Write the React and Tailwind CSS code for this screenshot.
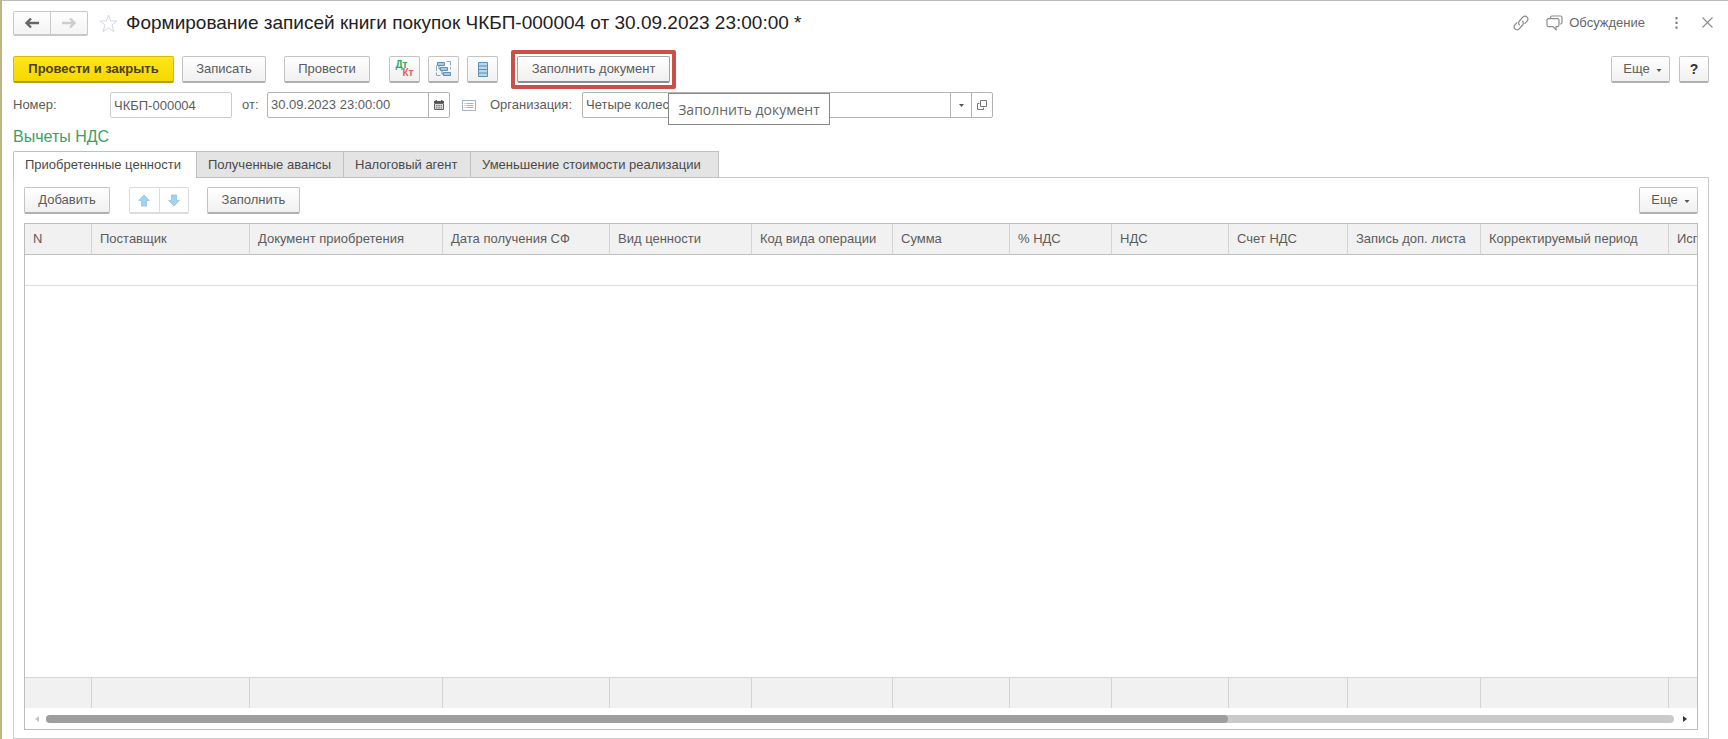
import React, { useState } from 'react';

const columns = [
    { title: 'N', width: 67 },
    { title: 'Поставщик', width: 158 },
    { title: 'Документ приобретения', width: 193 },
    { title: 'Дата получения СФ', width: 167 },
    { title: 'Вид ценности', width: 142 },
    { title: 'Код вида операции', width: 141 },
    { title: 'Сумма', width: 117 },
    { title: '% НДС', width: 102 },
    { title: 'НДС', width: 117 },
    { title: 'Счет НДС', width: 119 },
    { title: 'Запись доп. листа', width: 133 },
    { title: 'Корректируемый период', width: 188 },
    { title: 'Исправление', width: 160 },
];

const tabs = [
    { title: 'Приобретенные ценности', width: 'w-[184px]' },
    { title: 'Полученные авансы', width: 'w-[147px]' },
    { title: 'Налоговый агент', width: 'w-[127px]' },
    { title: 'Уменьшение стоимости реализации', width: 'w-[248px]' },
];

const tones = {
    plain: 'border-[#c4c4c4] border-b-[#b0b0b0] from-white to-[#f0f0f0]',
    primary: 'border-[#d6ba10] border-b-[#b39c10] from-[#ffe619] to-[#f5d800] font-bold text-[#4a4010]',
    focused: 'border-[#a4a4a8] border-b-[#8c8c94] from-white to-[#f0f0f0]',
};

function Button({ tone = 'plain', className = '', children, ...props }) {
    return (
        <button
            type="button"
            className={`flex h-[27px] shrink-0 items-center justify-center whitespace-nowrap rounded-xs border border-b-2 bg-linear-to-b ${tones[tone]} ${className}`}
            {...props}
        >
            {children}
        </button>
    );
}

function MoreButton() {
    return (
        <Button className="w-[59px] gap-[6px] pl-1">
            Еще
            <svg width="6" height="7" viewBox="0 0 6 7" fill="#555"><path d="M.5 3h5L3 6z" /></svg>
        </Button>
    );
}

function NavArrow({ color, flip }) {
    return (
        <svg width="16" height="12" viewBox="0 0 16 12" fill="none" stroke={color} strokeWidth="2.4" className={flip ? 'rotate-180' : ''}>
            <path d="M15 6H3M7 1.5 2.5 6 7 10.5" />
        </svg>
    );
}

function MoveArrow({ down }) {
    return (
        <svg width="12" height="13" viewBox="0 0 12 13" fill="#a3d3ef" stroke="#8fc2e0" strokeWidth="0.8" className={down ? 'rotate-180' : ''}>
            <path d="M6 1 11.3 6.5H8.5V12h-5V6.5H.7z" />
        </svg>
    );
}

function Header() {
    return (
        <header className="-mr-1 flex h-[25px] items-center">
            <div className="flex h-[25px] w-[75px] shrink-0 rounded-xs border border-b-2 border-[#c8c8c8] bg-linear-to-b from-white to-[#f4f4f4]">
                <button type="button" aria-label="Назад" className="flex flex-1 items-center justify-center border-r border-[#c8c8c8]">
                    <NavArrow color="#666" />
                </button>
                <button type="button" aria-label="Вперед" className="flex flex-1 items-center justify-center">
                    <NavArrow color="#cdcdcd" flip />
                </button>
            </div>
            <button type="button" aria-label="В избранное" className="ml-[11px]">
                <svg width="19" height="19" viewBox="0 0 19 19" fill="none" stroke="#d4d8dc" strokeWidth="1">
                    <path d="M9.5 1 11.7 7H18l-5 4 1.9 6.7-5.4-4-5.4 4L6 11 1 7h6.3z" />
                </svg>
            </button>
            <h1 className="ml-2 whitespace-nowrap pb-[2px] text-[19px] leading-6 text-[#222]">
                Формирование записей книги покупок ЧКБП-000004 от 30.09.2023 23:00:00 *
            </h1>
            <div className="ml-auto flex items-center pb-[2px] text-[#666]">
                <button type="button" aria-label="Получить ссылку">
                    <svg width="16" height="16" viewBox="0 0 16 16" fill="none" stroke="#8c8c8c" strokeWidth="1.2" strokeLinecap="round">
                        <path d="M6.4 9.8A3 3 0 0 1 6.4 6L9.8 2.1a2.9 2.9 0 0 1 4.3 0 3 3 0 0 1 0 4L12 8.4" />
                        <path d="M9.6 6.2a3 3 0 0 1 0 3.8l-3.4 3.9a2.9 2.9 0 0 1-4.3 0 3 3 0 0 1 0-4L4 7.6" />
                    </svg>
                </button>
                <button type="button" className="ml-[17px] flex items-center gap-[6px]">
                    <svg width="17" height="16" viewBox="0 0 17 16" fill="none" stroke="#8c8c8c" strokeWidth="1.2">
                        <path d="M4.5 3V2.5a1.5 1.5 0 0 1 1.5-1.5h8.500A1.5 1.5 0 0 1 16 2.5v5A1.5 1.5 0 0 1 14.5 9H14" />
                        <path d="M2.5 3.600h9A1.5 1.5 0 0 1 13 5.100v5a1.5 1.5 0 0 1-1.5 1.5H10V14.600L6.800 11.600H2.5A1.5 1.5 0 0 1 1 10.100v-5a1.5 1.5 0 0 1 1.5-1.5z" />
                    </svg>
                    Обсуждение
                </button>
                <button type="button" aria-label="Действия" className="ml-[30px]">
                    <svg width="3" height="12" viewBox="0 0 3 12" fill="#777">
                        <path d="M.5 0h2v2.200h-2zM.5 4.800h2V7h-2zM.5 9.600h2v2.200h-2z" />
                    </svg>
                </button>
                <button type="button" aria-label="Закрыть" className="ml-6">
                    <svg width="11" height="11" viewBox="0 0 11 11" stroke="#8c8c8c" strokeWidth="1.1"><path d="m.5.5 10 10m0-10-10 10" /></svg>
                </button>
            </div>
        </header>
    );
}

function Toolbar() {
    return (
        <div className="mt-[14px] flex h-[39px] items-center">
            <Button tone="primary" className="w-[161px]">Провести и закрыть</Button>
            <Button className="ml-2 w-[84px]">Записать</Button>
            <Button className="ml-[18px] w-[86px]">Провести</Button>
            <Button className="ml-[19px] w-[31px]" aria-label="Дт Кт">
                <span className="flex w-[18px] flex-col text-[10px] font-bold leading-[8px]">
                    <span className="self-start text-[#2ba866]">Дт</span>
                    <span className="self-end text-[#e45b5b]">Кт</span>
                </span>
            </Button>
            <Button className="ml-2 w-[31px]" aria-label="Структура подчиненности">
                <svg width="16" height="16" viewBox="0 0 16 16" fill="#a9cbe2" stroke="#5f8fb2" strokeWidth="1">
                    <path d="M10.5.5h4v4M14.5 6v2.5M.5 4.500V10M.5 11.5v3h4" fill="none" stroke="#86aac5" />
                    <path d="M1.5 1.5h7v3h-7zM4.500 6.5h7v3h-7zM7.500 11.5h7v3h-7z" />
                    <path d="M3 4.500V8h1.500M6 9.5V13h1.500" fill="none" />
                </svg>
            </Button>
            <Button className="ml-2 w-[31px]" aria-label="Реестр">
                <svg width="12" height="15" viewBox="0 0 12 15" fill="#b9d6ea" stroke="#5f8fb2">
                    <path d="M1.5.5h9v14h-9zM1.5 4h9M1.5 7.500h9M1.5 11h9" />
                </svg>
            </Button>
            <div className="ml-[13px] flex h-[39px] w-[165px] shrink-0 items-center justify-center rounded-xs border-4 border-[#cb4f46]">
                <Button tone="focused" className="w-[153px]" aria-describedby="fill-hint">Заполнить документ</Button>
            </div>
            <div className="ml-auto flex gap-[9px]">
                <MoreButton />
                <Button className="w-[30px] text-[14px] font-bold text-[#333]" aria-label="Справка">?</Button>
            </div>
        </div>
    );
}

function DocumentFields() {
    return (
        <div className="mt-[3px] flex h-[26px] items-center">
            <label htmlFor="number" className="w-[97px] shrink-0">Номер:</label>
            <input id="number" defaultValue="ЧКБП-000004" className="h-[26px] w-[122px] rounded-xs border border-[#ccc] px-[3px]" />
            <label htmlFor="date" className="ml-[10px] w-[25px] shrink-0">от:</label>
            <div className="flex h-[26px] w-[183px] shrink-0 rounded-xs border border-[#b4b4b4]">
                <input id="date" defaultValue="30.09.2023 23:00:00" className="min-w-0 flex-1 px-[3px]" />
                <button type="button" aria-label="Выбрать дату" className="flex w-[21px] items-center justify-center border-l border-[#b4b4b4]">
                    <svg width="10" height="10" viewBox="0 0 10 10" fill="#555">
                        <path d="M1.5 0H3v1h4V0h1.5v1H10v2H0V1h1.5z" />
                        <path d="M.5 3.500h9v6h-9z" fill="#ddd" stroke="#666" />
                        <path d="M2 5h1.5v1.200H2zM4.300 5h1.5v1.200H4.300zM6.600 5H8v1.200H6.600zM2 7.300h1.5v1.200H2zM4.300 7.300h1.5v1.200H4.300zM6.600 7.300H8v1.200H6.600z" fill="#777" />
                    </svg>
                </button>
            </div>
            <button type="button" aria-label="Список" className="ml-3">
                <svg width="14" height="11" viewBox="0 0 14 11" fill="none" stroke="#a6b1bc">
                    <path d="M.5.5h13v10H.5z" />
                    <path d="M2.5 3.500h1M2.5 5.500h1M2.5 7.500h1M4.500 3.500h7M4.500 5.500h7M4.500 7.500h7" />
                </svg>
            </button>
            <label htmlFor="org" className="ml-[14px] w-[92px] shrink-0">Организация:</label>
            <div className="relative flex h-[26px] w-[411px] shrink-0 rounded-xs border border-[#b4b4b4]">
                <input id="org" defaultValue="Четыре колеса" className="min-w-0 flex-1 px-[3px]" />
                <button type="button" aria-label="Выбрать" className="flex w-[21px] items-center justify-center border-l border-[#b4b4b4]">
                    <svg width="5" height="3" viewBox="0 0 5 3" fill="#555"><path d="M0 0h5L2.5 3z" /></svg>
                </button>
                <button type="button" aria-label="Открыть" className="flex w-[21px] items-center justify-center border-l border-[#b4b4b4]">
                    <svg width="10" height="10" viewBox="0 0 10 10" fill="none" stroke="#777">
                        <path d="M3.500.5h6v6h-6z" />
                        <path d="M2.5 3.500h-2v6h6v-2" />
                    </svg>
                </button>
                <div
                    id="fill-hint"
                    role="tooltip"
                    className="absolute left-[85px] top-0 flex h-8 w-[162px] items-center justify-center whitespace-nowrap border border-[#888] bg-white font-['Open_Sans','Noto_Sans',sans-serif] text-[14px] text-[#666]"
                >
                    Заполнить документ
                </div>
            </div>
        </div>
    );
}

function ItemsTable() {
    return (
        <div className="mt-[9px] flex min-h-0 flex-1 flex-col overflow-hidden border border-[#bdbdbd]">
            <div className="min-h-0 flex-1 overflow-hidden">
                <table className="h-full w-[1804px] table-fixed border-separate border-spacing-0">
                    <colgroup>
                        {columns.map((col) => <col key={col.title} style={{ width: col.width }} />)}
                    </colgroup>
                    <thead>
                        <tr className="h-[31px]">
                            {columns.map((col) => (
                                <th key={col.title} scope="col" className="whitespace-nowrap border-b border-r border-r-[#d4d4d4] border-b-[#c0c0c0] bg-[#f1f1f1] px-2 text-left font-normal">
                                    {col.title}
                                </th>
                            ))}
                        </tr>
                    </thead>
                    <tbody>
                        <tr className="h-[31px]"><td colSpan={columns.length} className="border-b border-[#dcdcdc]" /></tr>
                        <tr><td colSpan={columns.length} /></tr>
                    </tbody>
                    <tfoot>
                        <tr className="h-[31px]">
                            {columns.map((col) => (
                                <td key={col.title} className="border-r border-t border-[#d4d4d4] bg-[#f1f1f1]" />
                            ))}
                        </tr>
                    </tfoot>
                </table>
            </div>
            <div className="flex h-[21px] shrink-0 items-center px-[10px]">
                <svg width="4" height="6" viewBox="0 0 4 6" fill="#c4c4c4"><path d="M4 0v6L0 3z" /></svg>
                <div className="ml-[7px] mr-[9px] h-2 flex-1 rounded-full bg-[#cacaca]">
                    <div className="h-2 rounded-full bg-[#9e9e9e]" style={{ width: '72.6%' }} />
                </div>
                <svg width="4" height="6" viewBox="0 0 4 6" fill="#333"><path d="M0 0v6l4-3z" /></svg>
            </div>
        </div>
    );
}

export default function App() {
    const [active, setActive] = useState(0);

    return (
        <div className="flex h-screen min-h-[400px] flex-col overflow-hidden border-l-2 border-t border-l-[#bdb583] border-t-[#bbb] bg-white pl-[11px] pr-[19px] pt-[10px] font-['Liberation_Sans',Arial,sans-serif] text-[13px] text-[#5c5c5c]">
            <Header />
            <Toolbar />
            <DocumentFields />
            <h2 className="mt-2 text-[16px] leading-[22px] text-[#38a169]">Вычеты НДС</h2>

            <div role="tablist" className="mt-[3px] flex h-[27px] shrink-0">
                {tabs.map((tab, index) => (
                    <button
                        key={tab.title}
                        type="button"
                        role="tab"
                        aria-selected={active === index}
                        onClick={() => setActive(index)}
                        className={`h-[27px] whitespace-nowrap border-r border-t border-[#c0c0c0] pl-[11px] text-left text-[#4a4a4a] first:rounded-tl-xs first:border-l last:rounded-tr-xs ${tab.width} ${active === index ? 'bg-white' : 'border-b bg-[#e4e4e4]'}`}
                    >
                        {tab.title}
                    </button>
                ))}
                <div className="flex-1 border-b border-[#c8c8c8]" />
            </div>

            <section role="tabpanel" className="flex min-h-0 flex-1 flex-col border border-t-0 border-[#ccc] px-[10px] pb-2 pt-[9px]">
                <div className="flex">
                    <Button className="w-[86px]">Добавить</Button>
                    <div className="ml-[19px] flex h-[27px] w-[60px] rounded-xs border border-b-2 border-[#dcdcdc]">
                        <button type="button" aria-label="Вверх" className="flex flex-1 items-center justify-center border-r border-[#dcdcdc]"><MoveArrow /></button>
                        <button type="button" aria-label="Вниз" className="flex flex-1 items-center justify-center"><MoveArrow down /></button>
                    </div>
                    <Button className="ml-[18px] w-[93px]">Заполнить</Button>
                    <div className="ml-auto"><MoreButton /></div>
                </div>
                <ItemsTable />
            </section>
        </div>
    );
}
